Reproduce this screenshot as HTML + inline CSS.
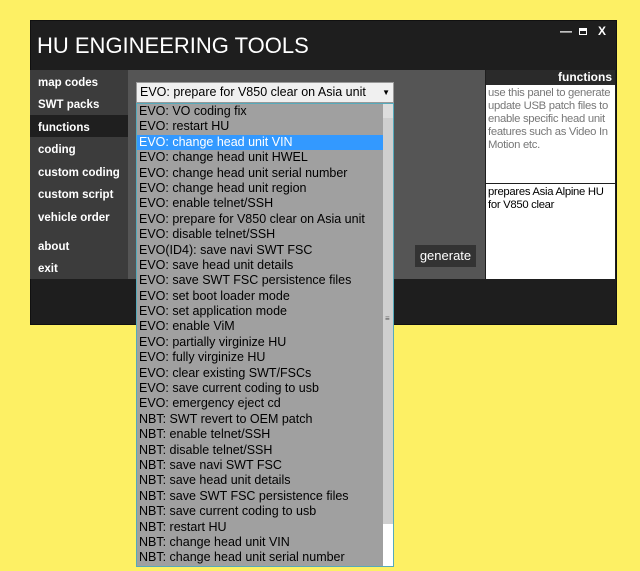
<!DOCTYPE html>
<html><head><style>
*{margin:0;padding:0;box-sizing:border-box}
body{width:640px;height:571px;background:#fdf064;position:relative;overflow:hidden;font-family:"Liberation Sans",sans-serif}
.win{position:absolute;left:30px;top:20px;width:587px;height:305px;background:#1e1e1e;border:1px solid #111}
.title{position:absolute;left:37px;top:33px;color:#fff;font-size:22px;letter-spacing:0px}
.ctl{position:absolute;top:24px;color:#fff;font-size:12px;font-weight:bold}
.side{position:absolute;left:30px;top:72px;width:98px;height:207px;background:#3c3c3c}
.side div{position:absolute;left:8px;color:#fff;font-weight:bold;font-size:11.5px}
.hl{position:absolute;left:30px;top:115px;width:98px;height:22px;background:#1f1f1f}
.content{position:absolute;left:128px;top:70px;width:357px;height:209px;background:#555}
.rhead{position:absolute;left:486px;top:70px;width:129px;height:15px;background:#2a2a2a;color:#fff;font-weight:bold;font-size:12px;text-align:right;padding-right:3px;line-height:14px}
.box{position:absolute;left:486px;width:129px;background:#fff;font-size:11.3px;line-height:13px;padding:2px 0 2px 2px;letter-spacing:-0.3px;white-space:nowrap;overflow:hidden}
.gen{position:absolute;left:415px;top:245px;width:61px;height:22px;background:#333;color:#fff;font-size:13px;text-align:center;line-height:21px}
.combo{position:absolute;left:136px;top:82px;width:258px;height:21px;background:#f0f0f0;border:1px solid #999;font-size:12.5px;line-height:19px;padding-left:3px}
.combo span{position:absolute;right:3px;top:0;font-size:8px}
.list{position:absolute;left:136px;top:103px;width:258px;height:464px;background:#a0a0a0;border:1px solid #5ab;}
.list div{height:15.4px;font-size:12.5px;line-height:15.4px;padding-left:2px;color:#000;white-space:nowrap;width:246px}
.list .sel{background:#3399ff;color:#fff}
.sb{position:absolute;left:383px;top:104px;width:10px;height:462px;background:#ddd}
</style></head><body>
<div class="win"></div>
<div class="title">HU ENGINEERING TOOLS</div>
<div class="ctl" style="left:560px">&#8212;</div>
<div class="ctl" style="left:579px;width:8px;height:7px;border:1px solid #fff;border-top-width:3px;top:28px"></div>
<div class="ctl" style="left:598px">X</div>
<div class="side" style="top:70px;height:209px"></div>
<div class="hl"></div>
<div class="side" style="background:none">
<div style="top:5px">map codes</div>
<div style="top:27px">SWT packs</div>
<div style="top:50px">functions</div>
<div style="top:72px">coding</div>
<div style="top:95px">custom coding</div>
<div style="top:117px">custom script</div>
<div style="top:140px">vehicle order</div>
<div style="top:169px">about</div>
<div style="top:191px">exit</div>
</div>
<div class="content"></div>
<div class="rhead">functions</div>
<div class="box" style="top:85px;height:98px;color:#777">use this panel to generate<br>update USB patch files to<br>enable specific head unit<br>features such as Video In<br>Motion etc.</div>
<div class="box" style="top:184px;height:95px;color:#000">prepares Asia Alpine HU<br>for V850 clear</div>
<div class="gen">generate</div>
<div class="combo">EVO: prepare for V850 clear on Asia unit<span>&#9660;</span></div>
<div class="list">
<div>EVO: VO coding fix</div>
<div>EVO: restart HU</div>
<div class="sel">EVO: change head unit VIN</div>
<div>EVO: change head unit HWEL</div>
<div>EVO: change head unit serial number</div>
<div>EVO: change head unit region</div>
<div>EVO: enable telnet/SSH</div>
<div>EVO: prepare for V850 clear on Asia unit</div>
<div>EVO: disable telnet/SSH</div>
<div>EVO(ID4): save navi SWT FSC</div>
<div>EVO: save head unit details</div>
<div>EVO: save SWT FSC persistence files</div>
<div>EVO: set boot loader mode</div>
<div>EVO: set application mode</div>
<div>EVO: enable ViM</div>
<div>EVO: partially virginize HU</div>
<div>EVO: fully virginize HU</div>
<div>EVO: clear existing SWT/FSCs</div>
<div>EVO: save current coding to usb</div>
<div>EVO: emergency eject cd</div>
<div>NBT: SWT revert to OEM patch</div>
<div>NBT: enable telnet/SSH</div>
<div>NBT: disable telnet/SSH</div>
<div>NBT: save navi SWT FSC</div>
<div>NBT: save head unit details</div>
<div>NBT: save SWT FSC persistence files</div>
<div>NBT: save current coding to usb</div>
<div>NBT: restart HU</div>
<div>NBT: change head unit VIN</div>
<div>NBT: change head unit serial number</div>
</div>
<div class="sb"><div style="position:absolute;left:0;top:14px;width:10px;height:406px;background:#cfcfcf"></div><div style="position:absolute;left:0;top:420px;width:10px;height:42px;background:#fff"></div><div style="position:absolute;left:2px;top:210px;font-size:8px;color:#555">&#8801;</div></div>
</body></html>
